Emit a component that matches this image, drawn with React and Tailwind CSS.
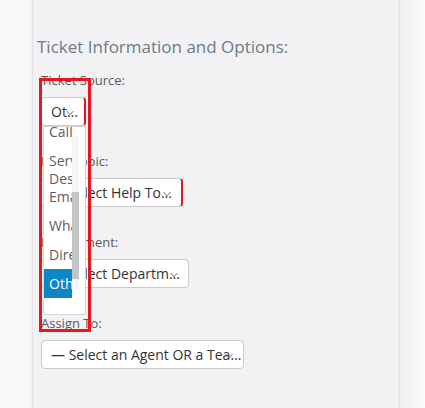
import React from 'react';

const Chevron = () => (
  <svg
    className="absolute right-[10px] top-1/2 -translate-y-[30%] w-[8px] h-[5px] text-[#666]"
    viewBox="0 0 8 5"
    fill="none"
    stroke="currentColor"
    strokeWidth="1"
  >
    <path d="M0.5 0.5 L4 4.2 L7.5 0.5" />
  </svg>
);

const FakeSelect = ({ text, width, invalid, children }) => (
  <div
    className={`relative h-[29px] bg-white border border-[#cacaca] rounded-[4px] text-[14px] leading-[27px] text-[#333] ${width} ${
      invalid ? 'border-r-2 border-r-[#e0141c]' : ''
    }`}
  >
    <div className="pl-[9px] pr-[1px] overflow-hidden whitespace-nowrap text-ellipsis">{text}</div>
    <Chevron />
    {children}
  </div>
);

const sources = [
  { label: 'Call' },
  { label: 'Service Desk Email' },
  { label: 'WhatsApp' },
  { label: 'Direct' },
  { label: 'Other', active: true },
];

const SourceList = () => (
  <div className="absolute left-[1px] top-[28px] z-10 w-[43px] h-[189px] bg-white border border-[#d4d4d4] rounded-b-[3px] overflow-hidden flex">
    {/* list items (scrolled down a bit) */}
    <div className="w-[28px] overflow-hidden">
      <div className="-mt-[10px]">
        {sources.map((s) => (
          <div
            key={s.label}
            className={`py-[5.5px] pl-[5px] text-[14px] leading-[18px] whitespace-normal ${
              s.active ? 'bg-[#0b86c8] text-white' : 'text-[#5e5e5e]'
            }`}
          >
            {s.label}
          </div>
        ))}
      </div>
    </div>
    {/* scrollbar */}
    <div className="w-[7px] flex flex-col">
      <div className="h-[9px] bg-white" />
      <div className="h-[56px] bg-[#f4f4f4]" />
      <div className="h-[87px] bg-[#c4c4c4]" />
      <div className="h-[10px] bg-[#f4f4f4]" />
      <div className="flex-1 bg-white" />
    </div>
  </div>
);

const Label = ({ children }) => (
  <div className="text-[13px] leading-[18px] text-[#5a5a5a] mb-[8px]">{children}</div>
);

export default function App() {
  return (
    <div
      className="relative w-[425px] h-[408px] flex overflow-hidden bg-[#f8f8f8]"
      style={{ fontFamily: '"Open Sans", "Liberation Sans", sans-serif' }}
    >
      <div className="w-[32px] shrink-0 bg-[#f8f8f8]" />

      <div className="w-[368px] shrink-0 bg-[#f2f2f4] border-l border-[#e4e4e6] border-r border-r-[#dde5ef] shadow-[-1px_0_2px_rgba(0,0,0,0.04)] pl-[4px] pt-[35px]">
        <h2 className="text-[17px] leading-[24px] text-[#6f7a85] font-normal mb-[12px]">
          Ticket Information and Options:
        </h2>

        <div className="pl-[4px]">
          <Label>Ticket Source:</Label>
          <div className="mb-[26px]">
            <FakeSelect text="Other" width="w-[45px]" invalid>
              <SourceList />
            </FakeSelect>
          </div>

          <Label>Help Topic:</Label>
          <div className="mb-[26px]">
            <FakeSelect text="— Select Help Topic —" width="w-[142px]" invalid />
          </div>

          <Label>Department:</Label>
          <div className="mb-[26px]">
            <FakeSelect text="— Select Department —" width="w-[148px]" />
          </div>

          <Label>Assign To:</Label>
          <FakeSelect text="— Select an Agent OR a Team —" width="w-[203px]" />
        </div>
      </div>

      <div className="flex-1 bg-gradient-to-r from-[#eef1ee] to-[#fbfbfb]" />

      {/* annotation frame */}
      <div className="absolute left-[39px] top-[78px] w-[52px] h-[254px] border-[3px] border-[#e8161f] z-20 pointer-events-none" />
    </div>
  );
}
